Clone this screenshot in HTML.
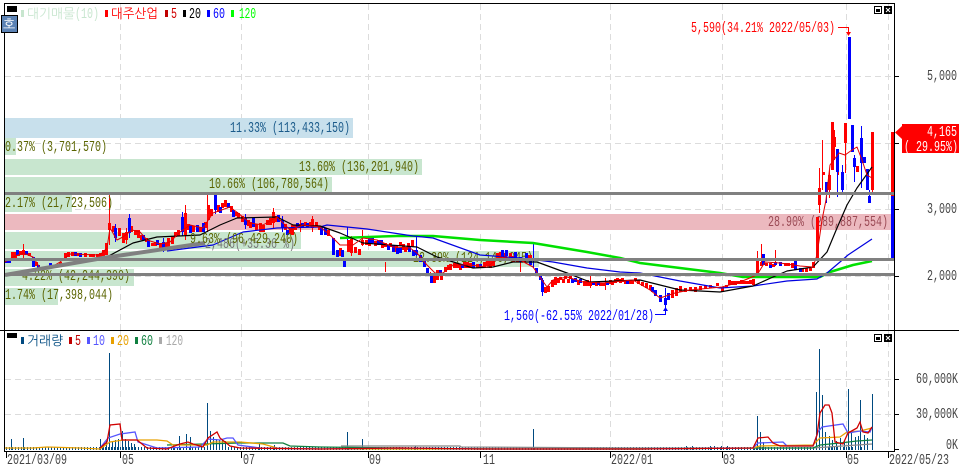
<!DOCTYPE html>
<html><head><meta charset="utf-8"><style>
html,body{margin:0;padding:0;background:#fff;width:959px;height:465px;overflow:hidden}
svg{display:block}
text{font-family:"Liberation Mono","NanumGothic",monospace;font-size:15px}
text.k{font-family:"Liberation Sans","NanumGothic","Noto Sans CJK KR",sans-serif;font-size:13px}
</style></head><body>
<svg width="959" height="465" viewBox="0 0 959 465" xmlns="http://www.w3.org/2000/svg">
<!-- grid -->
<g stroke="#dcdcdc" fill="none" stroke-dasharray="6 4" shape-rendering="crispEdges">
<path d="M120.5 4V330M241.5 4V330M368.5 4V330M480.5 4V330M610.5 4V330M722.5 4V330M846.5 4V330M888.5 4V330"/>
<path d="M120.5 331V451M241.5 331V451M368.5 331V451M480.5 331V451M610.5 331V451M722.5 331V451M846.5 331V451M888.5 331V451"/>
<path d="M5 76.5H894M5 143.5H894M5 209.5H894M5 276.5H894M5 379.5H894M5 414.5H894"/>
</g>
<!-- bars -->
<g shape-rendering="crispEdges">
<rect x="5" y="118" width="348" height="20" fill="#c8e0ec"/>
<rect x="5" y="138" width="11" height="17" fill="#c8e6cf"/>
<rect x="5" y="159" width="417" height="16" fill="#c8e6cf"/>
<rect x="5" y="177" width="327" height="16" fill="#c8e6cf"/>
<rect x="5" y="195" width="67" height="17" fill="#c8e6cf"/>
<rect x="5" y="214" width="886" height="16" fill="#ecb9bf"/>
<rect x="5" y="232" width="296" height="17" fill="#c8e6cf"/>
<rect x="5" y="251" width="534" height="16" fill="#c8e6cf"/>
<rect x="5" y="269" width="129" height="17" fill="#c8e6cf"/>
<rect x="5" y="288" width="53" height="17" fill="#c8e6cf"/>
</g>
<!-- bar labels -->
<g>
<text x="230" y="132" textLength="120" lengthAdjust="spacingAndGlyphs" fill="#1a5a8a">11.33% (113,433,150)</text>
<text x="5" y="151" textLength="102" lengthAdjust="spacingAndGlyphs" fill="#5a6400">0.37% (3,701,570)</text>
<text x="299" y="171" textLength="120" lengthAdjust="spacingAndGlyphs" fill="#5a6400">13.60% (136,201,940)</text>
<text x="209" y="188" textLength="120" lengthAdjust="spacingAndGlyphs" fill="#5a6400">10.66% (106,780,564)</text>
<text x="768" y="226" textLength="120" lengthAdjust="spacingAndGlyphs" fill="#9b4a55">28.90% (289,887,554)</text>
<text x="413" y="262" textLength="120" lengthAdjust="spacingAndGlyphs" fill="#5a6400">12.39% (124,146,045)</text>
<text x="22" y="280" textLength="108" lengthAdjust="spacingAndGlyphs" fill="#5a6400">4.22% (42,244,390)</text>
<text x="5" y="299" textLength="108" lengthAdjust="spacingAndGlyphs" fill="#5a6400">1.74% (17,398,044)</text>
</g>
<!-- candles: wicks -->
<g fill="none" shape-rendering="crispEdges">
<path stroke="#f00" d="M23.5 244V258M109.5 195V245M126.5 228V244M185.5 205V240M207.5 195V232M273.5 208V228M300.5 220V232M312.5 216V232M351.5 236V256M362.5 230V246M385.5 262V272M430.5 272V283M520.5 262V272M590.5 276V288M605.5 278V290M757.5 251V278M761.5 244V262M775.5 250V266M819.5 168V213M822.5 140V190M834.5 130V160M838.5 150V175M845.5 123V173M829.5 170V198M872.5 132V195"/>
<path stroke="#00f" d="M115.5 224V242M129.5 214V238M163.5 238V252M182.5 212V236M215.5 193V214M245.5 214V229M282.5 216V232M347.5 227V252M344.5 258V267M416.5 236V256M533.5 243V268M542.5 278V296M665.5 288V308M826.5 182V203M837.5 149V197M842.5 165V194M854.5 155V182M861.5 126V188M869.5 190V203"/>
</g>
<!-- candles: red bodies -->
<path fill="none" stroke="#f00" stroke-width="3" shape-rendering="crispEdges" d="M12.5 252V258M15.5 252V258M20.5 251V255M23.5 250V255M29.5 253V256M42.5 267V269M46.5 266V268M55.5 265V268M60.5 262V267M65.5 253V258M68.5 252V257M85.5 253V257M90.5 254V257M97.5 254V257M100.5 253V258M106.5 243V255M109.5 223V230M119.5 228V236M123.5 233V243M126.5 232V240M131.5 226V232M135.5 230V235M152.5 243V246M160.5 243V248M168.5 238V247M172.5 236V244M175.5 232V237M178.5 230V236M185.5 213V235M208.5 205V220M211.5 209V216M222.5 203V208M225.5 200V207M238.5 213V218M242.5 216V222M250.5 222V228M260.5 223V232M263.5 225V232M267.5 220V225M270.5 218V225M273.5 212V223M292.5 225V235M295.5 225V230M305.5 222V226M312.5 219V228M316.5 222V226M351.5 238V253M355.5 247V253M359.5 249V255M362.5 240V245M385.5 243V247M390.5 243V247M400.5 242V246M405.5 247V252M408.5 243V250M412.5 240V247M434.5 275V283M441.5 273V280M445.5 267V272M450.5 264V270M457.5 263V268M467.5 262V268M490.5 260V268M497.5 253V258M510.5 253V258M530.5 255V258M545.5 287V293M548.5 286V292M552.5 280V287M555.5 277V285M560.5 277V280M565.5 276V279M570.5 276V279M587.5 280V286M600.5 283V286M610.5 280V284M617.5 278V281M622.5 278V282M632.5 281V284M635.5 278V281M672.5 290V298M676.5 288V296M680.5 286V292M690.5 287V291M695.5 287V292M700.5 286V290M705.5 285V289M710.5 285V288M717.5 283V286M722.5 287V292M726.5 285V288M729.5 280V285M735.5 281V285M741.5 280V284M747.5 281V284M753.5 279V285M757.5 261V277M761.5 262V266M770.5 263V266M780.5 263V266M788.5 263V266M802.5 268V272M806.5 268V272M810.5 268V271M813.5 262V268M817.5 217V258M819.5 188V205M823.5 172V175M829.5 175V190M832.5 122V170M834.5 137V147M845.5 123V143M857.5 166V172M872.5 132V190M18.5 252V256M36.5 262V266M53.5 266V268M72.5 252V256M78.5 253V256M93.5 254V257M103.5 250V256M113.5 226V232M138.5 230V238M141.5 235V240M146.5 238V242M155.5 242V246M165.5 243V248M188.5 224V230M193.5 226V232M200.5 227V232M205.5 222V228M218.5 205V212M231.5 206V212M236.5 212V216M248.5 220V226M256.5 224V230M276.5 216V222M285.5 224V230M290.5 228V234M300.5 224V228M310.5 222V226M319.5 226V230M328.5 230V236M340.5 248V256M348.5 240V252M366.5 240V245M369.5 242V246M375.5 241V246M382.5 243V248M396.5 246V252M403.5 244V250M437.5 270V280M448.5 265V270M454.5 263V268M460.5 264V270M464.5 262V268M470.5 263V268M477.5 264V268M484.5 262V268M487.5 258V266M493.5 258V266M500.5 252V258M505.5 253V258M513.5 256V262M517.5 258V262M524.5 258V262M527.5 255V260M558.5 278V283M563.5 279V283M568.5 279V283M578.5 280V285M584.5 281V286M590.5 282V286M596.5 282V286M603.5 283V286M612.5 281V285M615.5 279V283M620.5 279V283M625.5 280V284M630.5 281V284M638.5 280V284M642.5 282V286M646.5 283V288M650.5 285V290M685.5 288V292M732.5 281V285M738.5 281V284M744.5 281V284M750.5 280V284M766.5 263V266M773.5 264V267M785.5 263V266M792.5 263V268"/>
<!-- candles: blue bodies -->
<path fill="none" stroke="#00f" stroke-width="3" shape-rendering="crispEdges" d="M6.5 261V263M9.5 261V263M17.5 250V255M26.5 251V255M33.5 257V267M38.5 265V268M50.5 263V268M75.5 252V256M80.5 253V257M115.5 228V238M129.5 218V233M143.5 235V240M148.5 240V247M157.5 240V245M163.5 242V248M182.5 217V232M190.5 225V233M197.5 225V232M203.5 223V232M215.5 195V210M220.5 207V213M228.5 203V208M233.5 210V217M245.5 218V225M253.5 218V227M278.5 215V222M282.5 220V228M287.5 230V235M297.5 223V228M302.5 223V228M307.5 223V227M321.5 227V235M325.5 228V235M333.5 238V255M337.5 250V257M342.5 250V257M344.5 260V267M372.5 238V243M378.5 240V245M393.5 245V252M400.5 248V253M416.5 250V255M420.5 255V262M424.5 260V267M427.5 268V273M431.5 275V283M473.5 262V268M480.5 264V268M502.5 250V257M520.5 257V262M530.5 258V265M536.5 268V273M540.5 276V280M542.5 280V292M575.5 278V282M580.5 279V283M593.5 282V285M607.5 282V285M627.5 281V284M655.5 290V296M660.5 295V302M665.5 298V305M668.5 293V300M763.5 254V265M770.5 265V268M775.5 262V265M780.5 262V266M795.5 260V270M800.5 268V272M826.5 182V192M837.5 149V172M842.5 172V190M849.5 37V119M852.5 125V152M854.5 158V167M861.5 138V163M864.5 157V163M867.5 169V190M869.5 196V203M369.5 238V243M381.5 240V245M388.5 245V250M397.5 248V254M409.5 246V252M413.5 250V256M440.5 270V276M462.5 264V268M506.5 250V256M515.5 252V258M526.5 253V260M572.5 279V283M598.5 282V285M652.5 287V292"/>
<!-- last day column -->
<rect x="891" y="132" width="3" height="64" fill="#f00" shape-rendering="crispEdges"/>
<rect x="891" y="196" width="3" height="62" fill="#00f" shape-rendering="crispEdges"/>
<!-- moving averages -->
<g fill="none" stroke-linejoin="round">
<polyline stroke="#00e000" stroke-width="2.5" points="340,238 397,236 433,236 480,240 533,243 587,252 620,258 640,263 680,268 720,273 743,277 820,277 830,272 853,265 872,261"/>
<polyline stroke="#0000e0" stroke-width="1.2" points="167,251 213,245 243,232 277,228 320,227 327,225 367,229 413,236 433,238 480,255 520,258 553,262 587,268 620,272 640,273 680,281 720,288 753,286 787,281 817,279 827,273 840,262 848,255 872,239"/>
<polyline stroke="#000" stroke-width="1.2" points="105,258 133,243 157,237 200,235 220,225 237,218 277,217 293,225 320,226 340,233 363,243 417,247 437,257 473,268 493,267 513,262 537,262 567,273 590,282 640,280 680,290 720,292 753,286 773,277 787,271 813,267 827,252 837,228 847,205 857,188 872,167"/>
<polyline stroke="#e00000" stroke-width="1" points="5,262 13,257 23,253 33,257 40,268 50,268 60,262 70,254 100,255 107,248 110,228 117,240 123,237 132,230 140,232 147,240 160,244 170,242 180,232 190,225 203,228 213,213 230,207 238,213 250,223 263,225 277,217 290,230 303,225 320,227 330,235 340,245 353,245 363,238 377,240 393,247 410,248 417,253 427,265 435,273 443,273 453,265 470,265 487,267 500,257 520,260 533,267 542,280 547,287 553,280 567,277 583,282 603,283 633,280 650,290 660,298 675,293 690,290 722,287 740,282 757,275 765,262 780,263 800,266 813,267 817,255 822,220 826,200 830,165 839,153 845,155 852,150 857,147 862,160 867,175 872,178"/>
</g>
<!-- thick gray levels -->
<g shape-rendering="crispEdges" fill="#808080">
<rect x="5" y="192" width="889" height="3"/>
<rect x="5" y="258" width="889" height="3"/>
<rect x="5" y="273" width="889" height="3"/>
</g>
<polyline points="5,275 103,258 205,243" fill="none" stroke="#808080" stroke-width="4"/>
<!-- overlay labels -->
<text x="5" y="207" textLength="108" lengthAdjust="spacingAndGlyphs" fill="#5a6400">2.17% (21,723,506)</text>
<text x="205" y="248" textLength="90" lengthAdjust="spacingAndGlyphs" fill="#777">2,486(+35.36 %)</text>
<text x="190" y="243" textLength="108" lengthAdjust="spacingAndGlyphs" fill="#5a6400">9.63% (96,429,240)</text>
<!-- annotations -->
<text x="691" y="32" textLength="144" lengthAdjust="spacingAndGlyphs" fill="#f00">5,590(34.21% 2022/05/03)</text>
<path d="M838 27.5H848.5V33" fill="none" stroke="#f00"/><path d="M846 32H851L848.5 36Z" fill="#f00"/>
<text x="504" y="320" textLength="150" lengthAdjust="spacingAndGlyphs" fill="#00f">1,560(-62.55% 2022/01/28)</text>
<path d="M655 314.5H665.5V310" fill="none" stroke="#00f"/><path d="M663 311H668L665.5 307Z" fill="#00f"/>
<!-- volume bars -->
<g fill="none" stroke="#004a80" shape-rendering="crispEdges">
<line x1="6" x2="870" y1="448.5" y2="448.5" stroke-width="3" stroke-dasharray="1 2"/>
<path d="M11.5 439V450M23.5 438V450M100.5 439V450M109.5 353V450M103.5 445V450M106.5 441V450M112.5 441V450M115.5 440V450M118.5 439V450M122.5 431V450M125.5 439V450M128.5 441V450M131.5 443V450M134.5 444V450M173.5 445V450M179.5 436V450M186.5 434V450M190.5 437V450M207.5 403V450M210.5 431V450M213.5 437V450M216.5 439V450M219.5 440V450M222.5 439V450M225.5 441V450M259.5 444V450M274.5 445V450M347.5 432V450M362.5 439V450M415.5 446V450M533.5 429V450M686.5 446V450M692.5 446V450M710.5 446V450M714.5 446V450M721.5 446V450M727.5 446V450M754.5 444V450M757.5 416V450M760.5 432V450M763.5 442V450M816.5 392V450M819.5 349V450M822.5 395V450M825.5 432V450M829.5 436V450M832.5 440V450M836.5 441V450M840.5 438V450M844.5 440V450M848.5 389V450M851.5 432V450M855.5 437V450M858.5 436V450M860.5 400V450M864.5 435V450M867.5 438V450M872.5 394V450"/>
</g>
<!-- volume MAs -->
<g fill="none" stroke-width="1">
<polyline stroke="#888" stroke-width="1.3" points="341,446 460,446 461,447 640,448 813,448 872,444"/>
<polyline stroke="#108040" stroke-width="1.3" points="167,445 240,443 283,443 290,446 320,447 400,448 500,449 640,449 753,448 813,448 820,445 840,443 857,441 872,440"/>
<polyline stroke="#e8a000" stroke-width="1.3" points="5,448 33,448 47,447 80,448 100,449 110,442 123,440 157,440 167,441 173,445 207,445 213,442 240,442 263,444 277,448 320,449 400,449 480,449 640,449 753,448 760,446 813,445 820,438 840,437 847,432 860,431 872,428"/>
<polyline stroke="#5555ff" stroke-width="1.3" points="100,448 108,438 120,434 135,432 138,442 157,448 200,447 208,439 220,440 227,438 233,438 238,445 260,448 320,449 400,448 480,449 640,449 753,448 758,443 783,442 787,446 813,446 818,432 822,427 843,424 848,433 860,431 870,432 872,427"/>
<polyline stroke="#d00000" stroke-width="1.3" points="100,448 107,442 110,425 120,424 122,440 137,440 147,448 167,449 180,444 188,442 193,444 203,447 208,438 217,432 220,438 230,446 240,448 320,449 400,448 480,449 640,449 753,448 758,438 768,437 773,443 780,446 813,446 817,435 820,413 825,405 829,405 832,413 835,442 843,444 848,433 857,428 860,422 863,432 868,433 872,427"/>
</g>
<!-- frame -->
<g fill="#000" shape-rendering="crispEdges">
<rect x="4" y="3" width="891" height="1"/>
<rect x="4" y="3" width="1" height="449"/>
<rect x="894" y="3" width="1" height="449"/>
<rect x="0" y="330" width="959" height="1"/>
<rect x="4" y="451" width="891" height="1"/>
<rect x="895" y="76" width="4" height="1"/>
<rect x="895" y="143" width="4" height="1"/>
<rect x="895" y="209" width="4" height="1"/>
<rect x="895" y="276" width="4" height="1"/>
<rect x="895" y="379" width="4" height="1"/>
<rect x="895" y="414" width="4" height="1"/>
<rect x="895" y="449" width="4" height="1"/>
<rect x="6" y="452" width="1" height="6"/>
<rect x="120" y="452" width="1" height="6"/>
<rect x="241" y="452" width="1" height="6"/>
<rect x="368" y="452" width="1" height="6"/>
<rect x="480" y="452" width="1" height="6"/>
<rect x="610" y="452" width="1" height="6"/>
<rect x="722" y="452" width="1" height="6"/>
<rect x="846" y="452" width="1" height="6"/>
<rect x="888" y="452" width="1" height="6"/>
</g>
<!-- price tag -->
<rect x="902" y="124" width="57" height="29" fill="#f00"/>
<path d="M895 132.5L902 126V139Z" fill="#f00"/>
<text x="927" y="136" textLength="30" lengthAdjust="spacingAndGlyphs" fill="#fff">4,165</text>
<text x="904" y="151" textLength="54" lengthAdjust="spacingAndGlyphs" fill="#fff">( 29.95%)</text>
<!-- axis labels -->
<g fill="#444">
<text x="927" y="80" textLength="30" lengthAdjust="spacingAndGlyphs">5,000</text>
<text x="927" y="213" textLength="30" lengthAdjust="spacingAndGlyphs">3,000</text>
<text x="927" y="280" textLength="30" lengthAdjust="spacingAndGlyphs">2,000</text>
<text x="916" y="383" textLength="42" lengthAdjust="spacingAndGlyphs">60,000K</text>
<text x="916" y="418" textLength="42" lengthAdjust="spacingAndGlyphs">30,000K</text>
<text x="946" y="449" textLength="12" lengthAdjust="spacingAndGlyphs">0K</text>
<text x="7" y="464" textLength="60" lengthAdjust="spacingAndGlyphs">2021/03/09</text>
<text x="122" y="464" textLength="12" lengthAdjust="spacingAndGlyphs">05</text>
<text x="243" y="464" textLength="12" lengthAdjust="spacingAndGlyphs">07</text>
<text x="369" y="464" textLength="12" lengthAdjust="spacingAndGlyphs">09</text>
<text x="483" y="464" textLength="12" lengthAdjust="spacingAndGlyphs">11</text>
<text x="611" y="464" textLength="42" lengthAdjust="spacingAndGlyphs">2022/01</text>
<text x="723" y="464" textLength="12" lengthAdjust="spacingAndGlyphs">03</text>
<text x="847" y="464" textLength="12" lengthAdjust="spacingAndGlyphs">05</text>
<text x="889" y="464" textLength="60" lengthAdjust="spacingAndGlyphs">2022/05/23</text>
</g>
<!-- top-left controls -->
<rect x="7" y="6" width="10" height="6" fill="#000"/>
<rect x="1.5" y="15.5" width="16" height="17" fill="#5b82b4" stroke="#000"/>
<text x="3" y="29" class="k" fill="#fff">호</text>
<rect x="7" y="333" width="10" height="5" fill="#000"/>
<!-- legend top -->
<g shape-rendering="crispEdges">
<rect x="21" y="10" width="3" height="7" fill="#c8e6cf"/>
<rect x="105" y="10" width="3" height="7" fill="#f00"/>
<rect x="165" y="10" width="3" height="7" fill="#c00000"/>
<rect x="183" y="10" width="3" height="7" fill="#000"/>
<rect x="207" y="10" width="3" height="7" fill="#00f"/>
<rect x="231" y="10" width="3" height="7" fill="#0f0"/>
</g>
<text x="27" y="18" class="k" textLength="48" lengthAdjust="spacingAndGlyphs" fill="#c8e6cf">대기매물</text>
<text x="75" y="18" textLength="24" lengthAdjust="spacingAndGlyphs" fill="#c8e6cf">(10)</text>
<text x="111" y="18" class="k" textLength="47" lengthAdjust="spacingAndGlyphs" fill="#f00">대주산업</text>
<text x="171" y="18" textLength="6" lengthAdjust="spacingAndGlyphs" fill="#d00000">5</text>
<text x="189" y="18" textLength="12" lengthAdjust="spacingAndGlyphs" fill="#000">20</text>
<text x="213" y="18" textLength="12" lengthAdjust="spacingAndGlyphs" fill="#00f">60</text>
<text x="239" y="18" textLength="17" lengthAdjust="spacingAndGlyphs" fill="#0f0">120</text>
<!-- legend volume -->
<g shape-rendering="crispEdges">
<rect x="21" y="337" width="3" height="7" fill="#004a80"/>
<rect x="69" y="337" width="3" height="7" fill="#c00000"/>
<rect x="87" y="337" width="3" height="7" fill="#5555ff"/>
<rect x="111" y="337" width="3" height="7" fill="#e8a000"/>
<rect x="135" y="337" width="3" height="7" fill="#108040"/>
<rect x="159" y="337" width="3" height="7" fill="#aaa"/>
</g>
<text x="27" y="345" class="k" textLength="36" lengthAdjust="spacingAndGlyphs" fill="#004a80">거래량</text>
<text x="75" y="345" textLength="6" lengthAdjust="spacingAndGlyphs" fill="#c00000">5</text>
<text x="93" y="345" textLength="12" lengthAdjust="spacingAndGlyphs" fill="#5555ff">10</text>
<text x="117" y="345" textLength="12" lengthAdjust="spacingAndGlyphs" fill="#e8a000">20</text>
<text x="141" y="345" textLength="12" lengthAdjust="spacingAndGlyphs" fill="#108040">60</text>
<text x="166" y="345" textLength="17" lengthAdjust="spacingAndGlyphs" fill="#aaa">120</text>
<!-- window buttons -->
<g shape-rendering="crispEdges">
<rect x="874.5" y="6.5" width="7" height="7" fill="#fff" stroke="#000"/><rect x="876" y="9" width="4" height="3" fill="#000"/>
<rect x="884" y="6" width="8" height="8" fill="#000"/>
<rect x="874.5" y="334.5" width="7" height="7" fill="#fff" stroke="#000"/><rect x="876" y="337" width="4" height="3" fill="#000"/>
<rect x="884" y="334" width="8" height="8" fill="#000"/>
</g>
<path d="M886 8L890 12M890 8L886 12M886 336L890 340M890 336L886 340" stroke="#fff" fill="none"/>
</svg>
</body></html>
